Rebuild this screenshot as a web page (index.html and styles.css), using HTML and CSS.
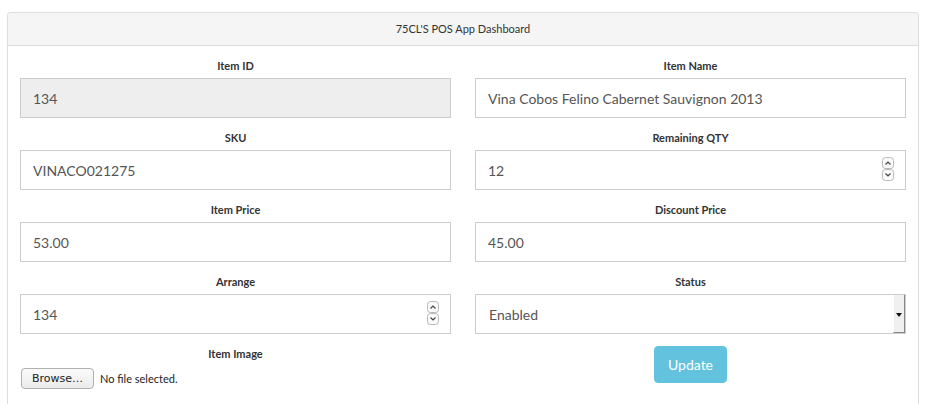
FILE: index.html
```html
<!DOCTYPE html>
<html lang="en">
<head>
  <meta charset="UTF-8">
  <title>75CL'S POS App Dashboard</title>
  <link rel="stylesheet" href="styles.css">
</head>
<body>
  <div class="panel">
    <div class="panel-heading">75CL'S POS App Dashboard</div>
    <form class="panel-body">
      <div class="field">
        <label for="itemId">Item ID</label>
        <input id="itemId" class="form-control" type="text" value="134" disabled>
      </div>
      <div class="field">
        <label for="itemName">Item Name</label>
        <input id="itemName" class="form-control" type="text" value="Vina Cobos Felino Cabernet Sauvignon 2013">
      </div>
      <div class="field">
        <label for="sku">SKU</label>
        <input id="sku" class="form-control" type="text" value="VINACO021275">
      </div>
      <div class="field">
        <label for="qty">Remaining QTY</label>
        <div class="spin-wrap">
          <input id="qty" class="form-control" type="text" value="12">
          <svg class="spinner" width="14" height="24" viewBox="0 0 14 24">
            <rect x="1.5" y="0.5" width="11" height="11" rx="3" fill="#fafafa" stroke="#b8b8b8"/>
            <rect x="1.5" y="12.5" width="11" height="11" rx="3" fill="#fafafa" stroke="#b8b8b8"/>
            <path d="M4.5 7.5 L7 5 L9.5 7.5" fill="none" stroke="#444" stroke-width="1.2"/>
            <path d="M4.5 16.5 L7 19 L9.5 16.5" fill="none" stroke="#444" stroke-width="1.2"/>
          </svg>
        </div>
      </div>
      <div class="field">
        <label for="price">Item Price</label>
        <input id="price" class="form-control" type="text" value="53.00">
      </div>
      <div class="field">
        <label for="discount">Discount Price</label>
        <input id="discount" class="form-control" type="text" value="45.00">
      </div>
      <div class="field">
        <label for="arrange">Arrange</label>
        <div class="spin-wrap">
          <input id="arrange" class="form-control" type="text" value="134">
          <svg class="spinner" width="14" height="24" viewBox="0 0 14 24">
            <rect x="1.5" y="0.5" width="11" height="11" rx="3" fill="#fafafa" stroke="#b8b8b8"/>
            <rect x="1.5" y="12.5" width="11" height="11" rx="3" fill="#fafafa" stroke="#b8b8b8"/>
            <path d="M4.5 7.5 L7 5 L9.5 7.5" fill="none" stroke="#444" stroke-width="1.2"/>
            <path d="M4.5 16.5 L7 19 L9.5 16.5" fill="none" stroke="#444" stroke-width="1.2"/>
          </svg>
        </div>
      </div>
      <div class="field">
        <label for="status">Status</label>
        <div class="select-wrap">
          <select id="status" class="form-control">
            <option>Enabled</option>
            <option>Disabled</option>
          </select>
          <span class="select-btn"></span>
        </div>
      </div>
      <div class="field">
        <label>Item Image</label>
        <div class="file-row">
          <span class="browse">Browse&hellip;</span>
          <span class="file-name">No file selected.</span>
        </div>
      </div>
      <div class="field actions">
        <button type="button" class="btn-update">Update</button>
      </div>
    </form>
  </div>
</body>
</html>
```

FILE: styles.css
```css
/* General Styles */
body {
  font-family: Lato, "Open Sans", sans-serif;
  color: #333;
  margin: 8px 9px 8px 7px;
  background: #fff;
}

.panel {
  margin-top: 4px;
  border: 1px solid #ddd;
  border-bottom: none;
  border-radius: 4px 4px 0 0;
  min-height: 420px;
}

.panel-heading {
  background-color: #f5f5f5;
  border-bottom: 1px solid #ddd;
  height: 32px;
  line-height: 32px;
  text-align: center;
  font-size: 11px;
  color: #333;
  border-radius: 4px 4px 0 0;
}

.panel-body {
  display: grid;
  grid-template-columns: 1fr 1fr;
  column-gap: 24px;
  row-gap: 12px;
  padding: 12px 12px 0;
}

.field {
  display: flex;
  flex-direction: column;
}

label {
  font-weight: bold;
  font-size: 11px;
  line-height: 16px;
  height: 16px;
  margin-bottom: 4px;
  text-align: center;
  color: #333;
}

.form-control {
  box-sizing: border-box;
  width: 100%;
  height: 40px;
  padding: 0 12px;
  border: 1px solid #ccc;
  border-radius: 0;
  font-family: Lato, sans-serif;
  font-size: 14px;
  color: #555;
  background: #fff;
  outline: none;
}

.form-control:disabled {
  background-color: #eee;
}

.spin-wrap,
.select-wrap {
  position: relative;
}

.spinner {
  position: absolute;
  right: 11px;
  top: 7px;
}

select.form-control {
  appearance: none;
  -webkit-appearance: none;
  padding-left: 13px;
}

.select-btn {
  position: absolute;
  right: 1px;
  top: 1px;
  bottom: 1px;
  width: 10px;
  background: #f0f0f0;
  border-left: 1px solid #fff;
  border-right: 1px solid #888;
  border-bottom: 1px solid #888;
  pointer-events: none;
}

.select-btn::after {
  content: "";
  position: absolute;
  left: 2px;
  top: 18px;
  border-left: 3px solid transparent;
  border-right: 3px solid transparent;
  border-top: 4px solid #111;
}

.file-row {
  display: flex;
  align-items: center;
  margin-top: 2px;
}

.browse {
  box-sizing: border-box;
  width: 73px;
  height: 21px;
  line-height: 19px;
  margin-left: 1px;
  text-align: center;
  font-family: "DejaVu Sans", sans-serif;
  font-size: 11px;
  color: #222;
  border: 1px solid #b0b0b0;
  border-radius: 4px;
  background: linear-gradient(#fbfbfb, #ebebeb);
}

.file-name {
  margin-left: 6px;
  font-size: 11px;
  color: #222;
}

.actions {
  align-items: center;
}

.btn-update {
  width: 73px;
  height: 37px;
  border: 1px solid #5bc0de;
  border-radius: 4px;
  background-color: #5bc0de;
  color: #fff;
  font-family: Lato, sans-serif;
  font-size: 14px;
  opacity: 0.95;
  cursor: pointer;
}
```
